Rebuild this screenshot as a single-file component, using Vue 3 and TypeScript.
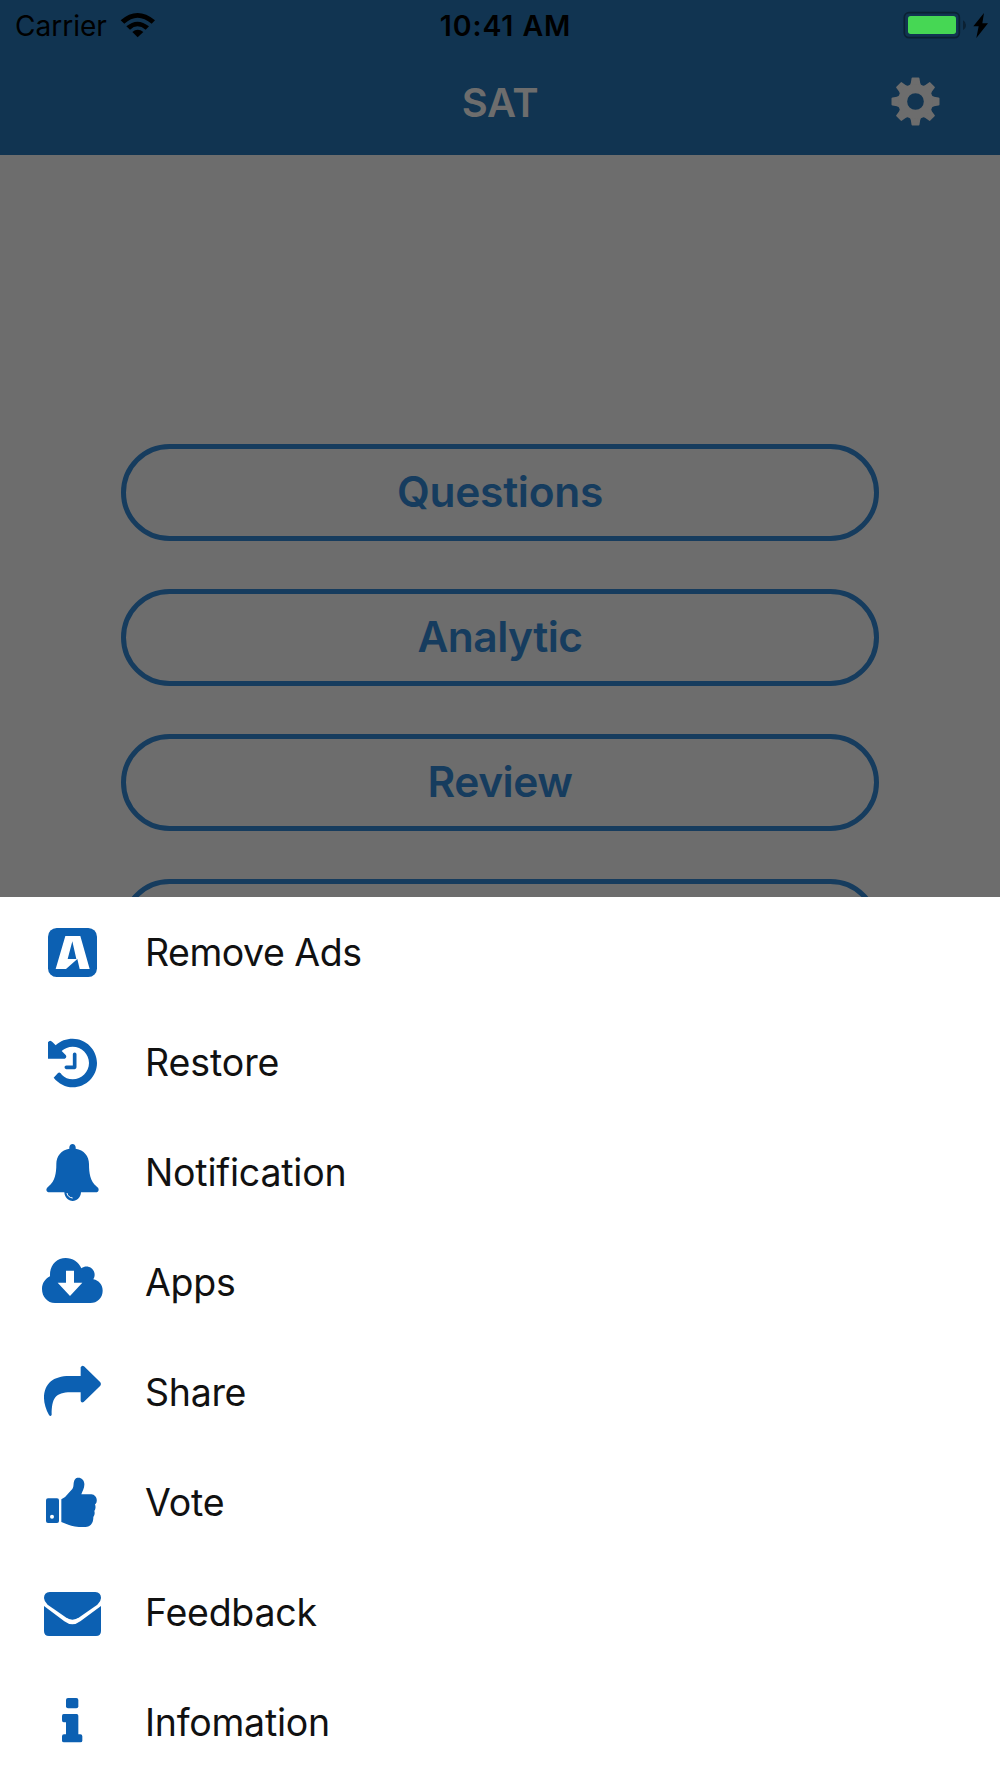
<script setup lang="ts">
interface MenuItem {
  label: string
  icon: string
  top: number
  spacing: number
}

const buttons: { label: string; spacing: number }[] = [
  { label: 'Questions', spacing: -0.3 },
  { label: 'Analytic', spacing: -0.55 },
  { label: 'Review', spacing: -0.5 },
  { label: '', spacing: 0 },
]

const items: MenuItem[] = [
  { label: 'Remove Ads', icon: 'ads', top: 51, spacing: -0.5 },
  { label: 'Restore', icon: 'restore', top: 21, spacing: -0.1 },
  { label: 'Notification', icon: 'bell', top: 351, spacing: -0.2 },
  { label: 'Apps', icon: 'cloud', top: 21, spacing: -0.3 },
  { label: 'Share', icon: 'share', top: 351, spacing: -0.3 },
  { label: 'Vote', icon: 'vote', top: 21, spacing: -0.2 },
  { label: 'Feedback', icon: 'mail', top: 351, spacing: -0.25 },
  { label: 'Infomation', icon: 'info', top: 21, spacing: -0.25 },
]
</script>

<template>
  <div class="screen">
    <header class="header">
      <div class="status">
        <div class="status-left">
          <span class="carrier">Carrier</span>
          <svg class="wifi" viewBox="360 33 108 78">
            <path d="M362 58Q412 14 465 58L455 68Q412 32 373 68Z" />
            <path d="M379 76Q412 48 447 76L437 86Q412 66 390 86Z" />
            <path d="M397 93Q413 80 430 93L413 109Z" />
          </svg>
        </div>
        <span class="time">10:41 AM</span>
        <svg class="battery" viewBox="159 30 258 84">
          <rect x="163" y="35" width="165" height="75" rx="14" fill="none" stroke="#0b2133" stroke-width="5" />
          <rect x="174" y="45" width="144" height="54" rx="8" fill="#46d754" />
          <path d="M339 58Q348 63 348 72Q348 82 339 87Z" fill="#0b2133" />
          <path d="M402 36L370 76H386L379 111L414 67H397Z" fill="#000" />
        </svg>
      </div>
      <div class="bar">
        <h1 class="title">SAT</h1>
        <svg class="gear" viewBox="120 226 153 153">
          <g fill="#6d6d6d" transform="translate(196.500 302.500)">
            <g v-for="n in 8" :key="n" :transform="`rotate(${n * 45})`">
              <path d="M-20-48Q-15-50-14-56L-12-69Q-12-72-9-72H9Q12-72 12-69L14-56Q15-50 20-48L16-36H-16Z" />
            </g>
            <path fill-rule="evenodd" d="M0-52A52 52 0 1 1 0 52A52 52 0 1 1 0-52ZM0-25A25 25 0 1 0 0 25A25 25 0 1 0 0-25Z" />
          </g>
        </svg>
      </div>
    </header>

    <main class="home">
      <button v-for="(b, i) in buttons" :key="i" class="pill" :style="{ letterSpacing: `${b.spacing}px` }">
        {{ b.label }}
      </button>
    </main>

    <nav class="sheet">
      <div v-for="item in items" :key="item.label" class="row">
        <svg class="icon" :viewBox="`0 ${item.top} 252 330`">
          <template v-if="item.icon === 'ads'">
            <rect x="54" y="144" width="147" height="147" rx="26" />
            <path class="cut" fill-rule="evenodd" d="M106 168H151L179 267H149L142 237L108 267H77ZM127 184L113 237H139Z" />
          </template>
          <template v-else-if="item.icon === 'restore'">
            <path d="M54 127Q60 117 68 127L77 136C91 122 109 116 128 116C168 116 201 149 201 189S168 262 128 262C107 262 86 251 71 233L84 219Q88 216 92 220L96 225C104 233 115 238 128 238C155 238 177 216 177 189S155 140 128 140C115 140 104 145 95 153L107 165Q112 172 104 176H54Z" />
            <path class="line" d="M134 163V202H109" />
          </template>
          <template v-else-if="item.icon === 'bell'">
            <path d="M118 446V441Q120 432 127.500 432T137 441V446C162 450 177 468 177 492C177 520 181 543 199 559Q207 564 206 569Q205 577 197 577H153C152 593 141 603 128 603S104 593 103 577H59Q50 577 49 569Q49 564 56 559C75 543 79 520 79 492C79 468 94 450 118 446Z" />
            <path class="shine" d="M111 579Q113 592 128 594" />
          </template>
          <template v-else-if="item.icon === 'cloud'">
            <path d="M75 249C52 249 36 230 36 207C36 190 45 177 60 169V163C60 136 80 114 107 114C128 114 146 126 154 145C172 132 194 145 194 165Q194 172 190 178C207 181 218 195 218 212C218 233 202 249 181 249Z" />
            <path class="cut" d="M108 152H132V188H157L120 228L83 188H108Z" />
          </template>
          <path v-else-if="item.icon === 'share'" d="M152 468V442Q156 434 162 439L211 487Q215 492 211 497L161 546Q154 550 152 543V517H122C76 517 65 535 65 584Q62 591 57 585C48 570 42 550 42 535C42 490 70 468 118 468Z" />
          <template v-else-if="item.icon === 'vote'">
            <rect x="48" y="175" width="39" height="74" rx="6" />
            <circle class="cut" cx="66" cy="230" r="6" />
            <path d="M94 178Q106 173 116 159L127 147C134 138 127 124 138 115C151 110 162 119 163 131C164 145 157 153 154 163H184C195 163 202 175 200 184C200 188 198 191 195 193Q199 204 193 213Q196 223 190 231C190 252 180 260 166 261C148 262 127 259 115 254L94 246Z" />
          </template>
          <template v-else-if="item.icon === 'mail'">
            <path d="M59 456H196Q213 457 213 474Q213 484 202 494L148 532Q127 546 107 532L53 494Q42 484 42 474Q42 457 59 456Z" />
            <path d="M42 498L103 544Q127 562 151 544L213 498V573Q213 588 198 588H57Q42 588 42 573Z" />
          </template>
          <template v-else>
            <rect x="108" y="114" width="37" height="31" rx="6" />
            <path d="M101 162H140Q145 162 145 167V223H151Q157 223 157 229V242Q157 247 151 247H102Q96 247 96 242V229Q96 223 102 223H108V187H101Q96 187 96 181V168Q96 162 101 162Z" />
          </template>
        </svg>
        <span class="label" :style="{ letterSpacing: `${item.spacing}px` }">{{ item.label }}</span>
      </div>
    </nav>
  </div>
</template>

<style>
body {
  margin: 0;
}
</style>

<style scoped>
.screen {
  display: flex;
  flex-direction: column;
  width: 1000px;
  height: 1778px;
  overflow: hidden;
  background: #6d6d6d;
  font-family: Inter, "Liberation Sans", sans-serif;
}
.header {
  height: 155px;
  flex: none;
  background: #113451;
}
.status {
  display: grid;
  grid-template-columns: 1fr auto 1fr;
  align-items: center;
  height: 50px;
  padding: 0 11px 0 15px;
  box-sizing: border-box;
  color: #000;
  font-size: 28px;
  line-height: 50px;
}
.status-left {
  display: flex;
  align-items: center;
}
.carrier {
  padding-top: 1px;
}
.wifi {
  width: 36px;
  height: 26px;
  margin: 0 0 2px 13px;
}
.time {
  font-size: 28.500px;
  font-weight: 560;
  letter-spacing: 0.900px;
  padding: 0 0 0 7px;
}
.battery {
  justify-self: end;
  width: 86px;
  height: 28px;
  margin-bottom: 2px;
}
.bar {
  display: grid;
  grid-template-columns: 1fr auto 1fr;
  align-items: center;
  height: 105px;
}
.title {
  grid-column: 2;
  margin: 0;
  color: #6d6d6d;
  font-size: 40px;
  line-height: 48px;
  font-weight: 560;
  letter-spacing: -0.400px;
}
.gear {
  justify-self: end;
  width: 51px;
  height: 51px;
  margin: 0 59px 3px 0;
}
.home {
  display: flex;
  flex-direction: column;
  align-items: center;
  gap: 48px;
  height: 742px;
  flex: none;
  box-sizing: border-box;
  padding-top: 289px;
  overflow: hidden;
}
.pill {
  flex: none;
  width: 758px;
  height: 97px;
  padding: 0 0 2px;
  box-sizing: border-box;
  border: 5px solid #163c5e;
  border-radius: 48.500px;
  background: none;
  color: #163c5e;
  font-family: inherit;
  font-size: 42.500px;
  font-weight: 580;
  line-height: 85px;
}
.sheet {
  flex: 1;
  background: #fff;
}
.row {
  display: flex;
  align-items: center;
  height: 110px;
  padding-left: 30px;
}
.icon {
  width: 84px;
  height: 110px;
  margin-right: 31px;
  fill: #0c60b2;
}
.cut {
  fill: #fff;
}
.line {
  fill: none;
  stroke: #0c60b2;
  stroke-width: 11px;
  stroke-linecap: round;
  stroke-linejoin: round;
}
.shine {
  fill: none;
  stroke: #fff;
  stroke-width: 3px;
}
.label {
  padding-top: 2px;
  color: #111;
  font-size: 37.500px;
  line-height: 48px;
  white-space: nowrap;
}
</style>
